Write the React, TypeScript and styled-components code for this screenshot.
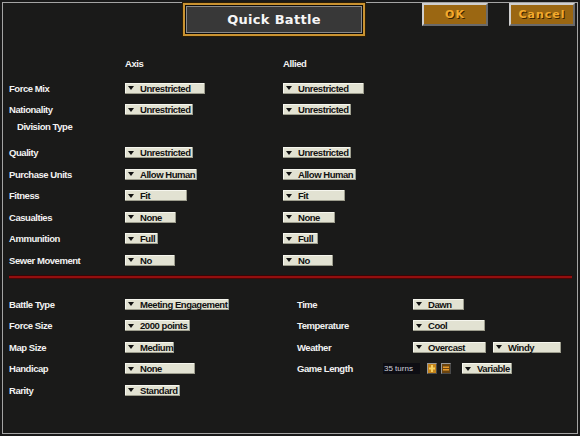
import React from 'react';
import styled, { createGlobalStyle } from 'styled-components';

const Global = createGlobalStyle`
  html, body { margin: 0; padding: 0; background: #191919; }
  body {
    width: 580px;
    height: 436px;
    overflow: hidden;
    font-family: "Liberation Sans", Arial, sans-serif;
  }
`;

const Screen = styled.div`
  width: 580px;
  height: 436px;
  box-sizing: border-box;
  padding: 2px;
  background: #191919;
`;

const Frame = styled.div`
  width: 576px;
  height: 432px;
  box-sizing: border-box;
  border: 1px solid #a4a4a4;
  display: flex;
  flex-direction: column;
  background: #1a1a19;
`;

const Header = styled.div`
  display: flex;
  align-items: flex-start;
  height: 34px;
  padding-left: 180px;
`;

const TitlePlate = styled.div`
  width: 182px;
  height: 33px;
  box-sizing: border-box;
  border: 2px solid #c99231;
  box-shadow: 0 0 0 1px #2b1d05;
  background: #0c0c0c;
  padding: 1px;
  display: flex;
`;

const TitleInner = styled.div`
  flex: 1;
  border: 1px solid #8a8a8a;
  background: #383838;
  display: flex;
  align-items: center;
  justify-content: center;
  color: #f6f6f6;
  font-family: "DejaVu Sans", sans-serif;
  font-weight: bold;
  font-size: 13px;
  letter-spacing: 0.3px;
`;

const GoldButton = styled.div<{ $gap: number }>`
  margin-left: ${(p) => p.$gap}px;
  width: 66px;
  height: 23px;
  box-sizing: border-box;
  border: 2px solid;
  border-color: #cfcfcf #6a6a6a #6a6a6a #cfcfcf;
  background: #9b6712;
  display: flex;
  align-items: center;
  justify-content: center;
  color: #f4aa2c;
  font-family: "DejaVu Sans", sans-serif;
  font-weight: 600;
  font-size: 11px;
  letter-spacing: 1px;
  text-shadow: 1px 1px 0 #3b2600;
`;

const UpperGrid = styled.div`
  margin-top: 15.75px;
  padding-left: 6px;
  display: grid;
  grid-template-columns: 116px 158px 1fr;
  grid-template-rows: 24.5px repeat(9, 21.5px);
  align-items: center;
`;

const ColumnHead = styled.div`
  align-self: start;
  height: 21.5px;
  display: flex;
  align-items: center;
  color: #f2f2f2;
  font-weight: bold;
  font-size: 9.5px;
  letter-spacing: -0.4px;
`;

const Label = styled.div<{ $indent?: boolean }>`
  padding-left: ${(p) => (p.$indent ? 8 : 0)}px;
  margin-bottom: ${(p) => (p.$indent ? 10 : 0)}px;
  color: #f2f2f2;
  font-weight: bold;
  font-size: 9.5px;
  letter-spacing: -0.45px;
  white-space: nowrap;
`;

const Dropdown = styled.div<{ $w: number }>`
  justify-self: start;
  width: ${(p) => p.$w}px;
  height: 11px;
  box-sizing: border-box;
  display: flex;
  align-items: center;
  gap: 6px;
  padding-left: 3px;
  background: #e2e2d2;
  box-shadow: inset -1px -1px 0 #9d9d8d, inset 1px 1px 0 #f6f6ee;
  color: #111;
  font-weight: bold;
  font-size: 9.5px;
  letter-spacing: -0.45px;
  white-space: nowrap;
  overflow: hidden;
`;

const Arrow = styled.span`
  flex: none;
  width: 0;
  height: 0;
  border-left: 3.5px solid transparent;
  border-right: 3.5px solid transparent;
  border-top: 4px solid #111;
`;

const Divider = styled.div`
  margin: 4.75px 0 0 6px;
  width: 563px;
  height: 2px;
  background: #930f0f;
  box-shadow: 0 1px 0 #4a0707, 0 -1px 0 #3a0505;
`;

const LowerGrid = styled.div`
  margin-top: 15.75px;
  padding-left: 6px;
  display: grid;
  grid-template-columns: 116px 172px 116px 1fr;
  grid-template-rows: repeat(5, 21.5px);
  align-items: center;
`;

const Pair = styled.div`
  display: flex;
  gap: 7px;
`;

const LengthRow = styled.div`
  grid-column: 3 / 5;
  display: flex;
  align-items: center;
`;

const LengthLabel = styled(Label)`
  width: 86px;
`;

const TurnCount = styled.div`
  width: 37px;
  height: 11px;
  box-sizing: border-box;
  padding-left: 1px;
  background: #0d0d13;
  color: #cfd0da;
  font-size: 8px;
  line-height: 11px;
  white-space: nowrap;
`;

const StepButton = styled.div<{ $plus?: boolean; $gap: number }>`
  margin-left: ${(p) => p.$gap}px;
  width: 10px;
  height: 11px;
  box-sizing: border-box;
  border: 1px solid;
  border-color: #9a9a9a #4a4a4a #4a4a4a #9a9a9a;
  background: ${(p) => (p.$plus ? '#c4841c' : '#6a4410')};
  display: flex;
  align-items: center;
  justify-content: center;
`;

const VariableBox = styled(Dropdown)`
  margin-left: 11px;
`;

type UpperRow = { label: string; indent?: boolean; axis?: [string, number]; allied?: [string, number] };

const upperRows: UpperRow[] = [
  { label: 'Force Mix', axis: ['Unrestricted', 80], allied: ['Unrestricted', 81] },
  { label: 'Nationality', axis: ['Unrestricted', 68], allied: ['Unrestricted', 68] },
  { label: 'Division Type', indent: true },
  { label: 'Quality', axis: ['Unrestricted', 68], allied: ['Unrestricted', 68] },
  { label: 'Purchase Units', axis: ['Allow Human', 72], allied: ['Allow Human', 73] },
  { label: 'Fitness', axis: ['Fit', 62], allied: ['Fit', 62] },
  { label: 'Casualties', axis: ['None', 51], allied: ['None', 52] },
  { label: 'Ammunition', axis: ['Full', 33], allied: ['Full', 35] },
  { label: 'Sewer Movement', axis: ['No', 50], allied: ['No', 50] },
];

const leftSettings: [string, string, number][] = [
  ['Battle Type', 'Meeting Engagement', 104],
  ['Force Size', '2000 points', 65],
  ['Map Size', 'Medium', 49],
  ['Handicap', 'None', 70],
  ['Rarity', 'Standard', 55],
];

const Select = ({ value, width }: { value: string; width: number }) => (
  <Dropdown $w={width}>
    <Arrow />
    <span>{value}</span>
  </Dropdown>
);

const Blank = styled.div``;

export default function App() {
  return (
    <Screen>
      <Global />
      <Frame>
        <Header>
          <TitlePlate>
            <TitleInner>Quick Battle</TitleInner>
          </TitlePlate>
          <GoldButton $gap={57}>OK</GoldButton>
          <GoldButton $gap={21}>Cancel</GoldButton>
        </Header>

        <UpperGrid>
          <Blank />
          <ColumnHead>Axis</ColumnHead>
          <ColumnHead>Allied</ColumnHead>
          {upperRows.map((r) => (
            <React.Fragment key={r.label}>
              <Label $indent={r.indent}>{r.label}</Label>
              {r.axis ? <Select value={r.axis[0]} width={r.axis[1]} /> : <Blank />}
              {r.allied ? <Select value={r.allied[0]} width={r.allied[1]} /> : <Blank />}
            </React.Fragment>
          ))}
        </UpperGrid>

        <Divider />

        <LowerGrid>
          <Label>{leftSettings[0][0]}</Label>
          <Select value={leftSettings[0][1]} width={leftSettings[0][2]} />
          <Label>Time</Label>
          <Select value="Dawn" width={51} />

          <Label>{leftSettings[1][0]}</Label>
          <Select value={leftSettings[1][1]} width={leftSettings[1][2]} />
          <Label>Temperature</Label>
          <Select value="Cool" width={72} />

          <Label>{leftSettings[2][0]}</Label>
          <Select value={leftSettings[2][1]} width={leftSettings[2][2]} />
          <Label>Weather</Label>
          <Pair>
            <Select value="Overcast" width={73} />
            <Select value="Windy" width={68} />
          </Pair>

          <Label>{leftSettings[3][0]}</Label>
          <Select value={leftSettings[3][1]} width={leftSettings[3][2]} />
          <LengthRow>
            <LengthLabel>Game Length</LengthLabel>
            <TurnCount>35 turns</TurnCount>
            <StepButton $plus $gap={7}>
              <svg width="6" height="7" viewBox="0 0 6 7">
                <rect x="2" y="0" width="2" height="7" fill="#f7d160" />
                <rect x="0" y="2.5" width="6" height="2" fill="#f7d160" />
              </svg>
            </StepButton>
            <StepButton $gap={4}>
              <svg width="6" height="7" viewBox="0 0 6 7">
                <rect x="0" y="1.5" width="6" height="1.5" fill="#e89a2a" />
                <rect x="0" y="4" width="6" height="1.5" fill="#e89a2a" />
              </svg>
            </StepButton>
            <VariableBox $w={50}>
              <Arrow />
              <span>Variable</span>
            </VariableBox>
          </LengthRow>

          <Label>{leftSettings[4][0]}</Label>
          <Select value={leftSettings[4][1]} width={leftSettings[4][2]} />
        </LowerGrid>
      </Frame>
    </Screen>
  );
}
